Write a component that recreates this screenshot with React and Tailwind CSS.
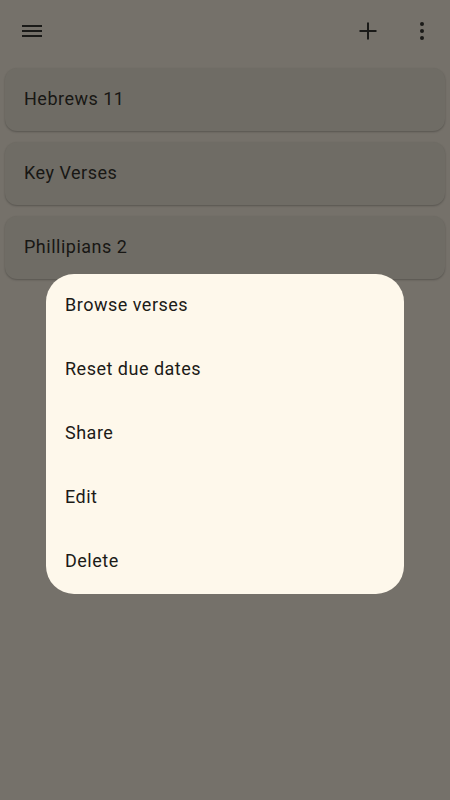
export default function App() {
  const lists = ["Hebrews 11", "Key Verses", "Phillipians 2"];
  const items = ["Browse verses", "Reset due dates", "Share", "Edit", "Delete"];
  return (
    <div
      className="relative w-[450px] h-[800px] overflow-hidden bg-[#75716a]"
      style={{ fontFamily: "Roboto, 'Noto Sans', sans-serif" }}
    >
      <div className="h-[62px] flex items-center pl-[20px]">
        <svg width="24" height="24" viewBox="0 0 24 24">
          <path d="M2 18h20v-2H2v2zm0-5h20v-2H2v2zm0-7v2h20V6H2z" fill="#1a1a18" />
        </svg>
        <div className="flex-1" />
        <svg width="20" height="20" viewBox="0 0 20 20" className="mr-[40px]">
          <path d="M10 1.5v17M1.5 10h17" stroke="#1a1a18" strokeWidth="2" />
        </svg>
        <svg width="8" height="22" viewBox="0 0 8 22" className="mr-[24px]">
          <circle cx="4" cy="4" r="2" fill="#1a1a18" />
          <circle cx="4" cy="11" r="2" fill="#1a1a18" />
          <circle cx="4" cy="18" r="2" fill="#1a1a18" />
        </svg>
      </div>
      <div className="flex flex-col gap-[11px] px-[5px] mt-[6px]">
        {lists.map((t) => (
          <div
            key={t}
            className="h-[63px] rounded-[12px] bg-[#6f6c65] shadow-[0_1px_2px_rgba(0,0,0,0.25)] flex items-center px-[19px] pb-[2px] text-[18px] tracking-[0.5px] text-[#181714]"
          >
            {t}
          </div>
        ))}
      </div>
      <div className="absolute left-[46px] top-[274px] w-[358px] rounded-[28px] bg-[#fef8eb] flex flex-col">
        {items.map((t) => (
          <div
            key={t}
            className="h-[64px] flex items-center px-[19px] pb-[3px] text-[18px] tracking-[0.5px] text-[#1c1b17]"
          >
            {t}
          </div>
        ))}
      </div>
    </div>
  );
}
